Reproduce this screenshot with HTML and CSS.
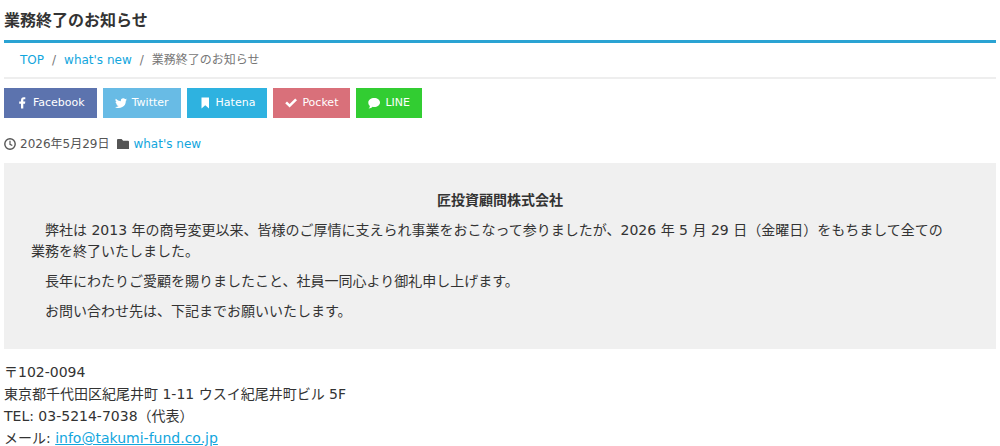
FILE: index.html
```html
<!DOCTYPE html>
<html lang="ja">
<head>
  <meta charset="UTF-8" />
  <meta name="viewport" content="width=device-width, initial-scale=1.0"/>
  <title>業務終了のお知らせ</title>
  <link rel="stylesheet" href="styles.css">
</head>
<body>
  <header>
    <h1>業務終了のお知らせ</h1>
  </header>

  <nav>
    <ol class="breadcrumb">
      <li><a href="#">TOP</a></li>
      <li><a href="#">what's new</a></li>
      <li>業務終了のお知らせ</li>
    </ol>
  </nav>

  <main>
    <div class="share">
      <a href="#" class="btn facebook">
        <svg class="icon" viewBox="0 0 12 12"><path d="M5 11.500V6.800H3.200V4.600H5V3.200C5 1.200 6.100.2 7.700.2h1.600v2.100H8.200c-.7 0-.9.3-.9.9v1.400h2L9 6.800H7.300v4.700z"/></svg>Facebook</a>
      <a href="#" class="btn twitter">
        <svg class="icon" viewBox="0 0 12 12"><path d="M12 2.400c-.4.200-.9.300-1.400.400.500-.300.900-.800 1.100-1.400-.5.300-1 .500-1.600.600a2.460 2.460 0 0 0-4.200 2.250A7 7 0 0 1 .850 1.700a2.460 2.460 0 0 0 .750 3.300c-.4 0-.8-.1-1.100-.3 0 1.200.8 2.200 2 2.450-.4.100-.7.100-1.100.050.300 1 1.200 1.650 2.300 1.700A5 5 0 0 1 0 9.900a7 7 0 0 0 10.800-6.200c.5-.3.900-.8 1.200-1.300z"/></svg>Twitter</a>
      <a href="#" class="btn hatena">
        <svg class="icon" viewBox="0 0 12 12"><path d="M2.500.5h7.500v11L6.250 8.200 2.500 11.500z"/></svg>Hatena</a>
      <a href="#" class="btn pocket">
        <svg class="icon" viewBox="0 0 12 12"><path d="M.2 6.300 2 4.500l2.600 2.600L10.200 1.500 12 3.300l-7.400 7.300z"/></svg>Pocket</a>
      <a href="#" class="btn line">
        <svg class="icon" viewBox="0 0 12 12"><path d="M6.200 1C9.400 1 12 2.900 12 5.500S9.400 10 6.200 10c-.6 0-1.100-.1-1.600-.2C3.600 10.800 2.300 11.500.6 11.500c.8-.7 1.200-1.500 1.300-2.600C.8 8.100.3 6.900.3 5.500.3 2.900 3 1 6.200 1z"/></svg>LINE</a>
    </div>

    <div class="meta">
      <span class="date">
        <svg class="icon" viewBox="0 0 12 12"><circle cx="6" cy="6" r="5.200" fill="none" stroke="currentColor" stroke-width="1.400"/><path d="M6 2.800V6.300L8.300 7.600" fill="none" stroke="currentColor" stroke-width="1.200"/></svg>2026年5月29日</span>
      <span class="category">
        <svg class="icon" viewBox="0 0 12 12"><path d="M0 2q0-1 1-1h3.600l1.500 1.800H11q1 0 1 1V11H0z"/></svg><a href="#">what's new</a></span>
    </div>

    <section class="notice">
      <h2>匠投資顧問株式会社</h2>
      <p>　弊社は 2013 年の商号変更以来、皆様のご厚情に支えられ事業をおこなって参りましたが、2026 年 5 月 29 日（金曜日）をもちまして全ての業務を終了いたしました。</p>
      <p>　長年にわたりご愛顧を賜りましたこと、社員一同心より御礼申し上げます。</p>
      <p>　お問い合わせ先は、下記までお願いいたします。</p>
    </section>

    <address>
      〒102-0094<br>
      東京都千代田区紀尾井町 1-11 ウスイ紀尾井町ビル 5F<br>
      TEL: 03-5214-7038（代表）<br>
      メール: <a href="mailto:info@takumi-fund.co.jp">info@takumi-fund.co.jp</a>
    </address>
  </main>
</body>
</html>
```
FILE: styles.css
```css
body {
  font-family: "DejaVu Sans", "Noto Sans CJK JP", sans-serif;
  font-size: 14px;
  line-height: 21px;
  color: #333;
  background-color: #fff;
  margin: 0;
  padding: 0 4px;
}
a {
  color: #12a6dd;
  text-decoration: none;
}
h1 {
  font-size: 16px;
  line-height: 24px;
  margin: 0;
  padding: 9px 0 7px;
  border-bottom: 3px solid #2aa3d3;
}
.breadcrumb {
  display: flex;
  list-style: none;
  margin: 0;
  padding: 9px 16px;
  font-size: 12px;
  line-height: 16px;
  color: #777;
  border-bottom: 2px solid #eee;
}
.breadcrumb li + li::before {
  content: "/";
  padding: 0 8px;
}
.share {
  display: flex;
  flex-wrap: wrap;
  gap: 6px;
  margin-top: 9px;
}
.btn {
  display: flex;
  align-items: center;
  gap: 5px;
  padding: 4px 12px;
  font-size: 11px;
  line-height: 22px;
  color: #fff;
}
.icon {
  width: 12px;
  height: 12px;
  fill: currentColor;
}
.facebook {
  background-color: #5c73ae;
}
.twitter {
  background-color: #68bbe5;
}
.hatena {
  background-color: #2eb2e0;
}
.pocket {
  background-color: #d9707a;
}
.line {
  background-color: #32cd32;
}
.meta {
  display: flex;
  gap: 8px;
  margin: 18px 0 11px;
  font-size: 12px;
  line-height: 16px;
  color: #555;
}
.meta span {
  display: flex;
  align-items: center;
  gap: 4px;
}
.notice {
  background-color: #f0f0f0;
  padding: 27px;
}
.notice h2 {
  font-size: 14px;
  text-align: center;
  margin: 0;
}
.notice p {
  margin: 9px 0 0;
  padding-right: 16px;
}
address {
  font-style: normal;
  line-height: 22px;
  margin-top: 12px;
}
address a {
  text-decoration: underline;
}
```
